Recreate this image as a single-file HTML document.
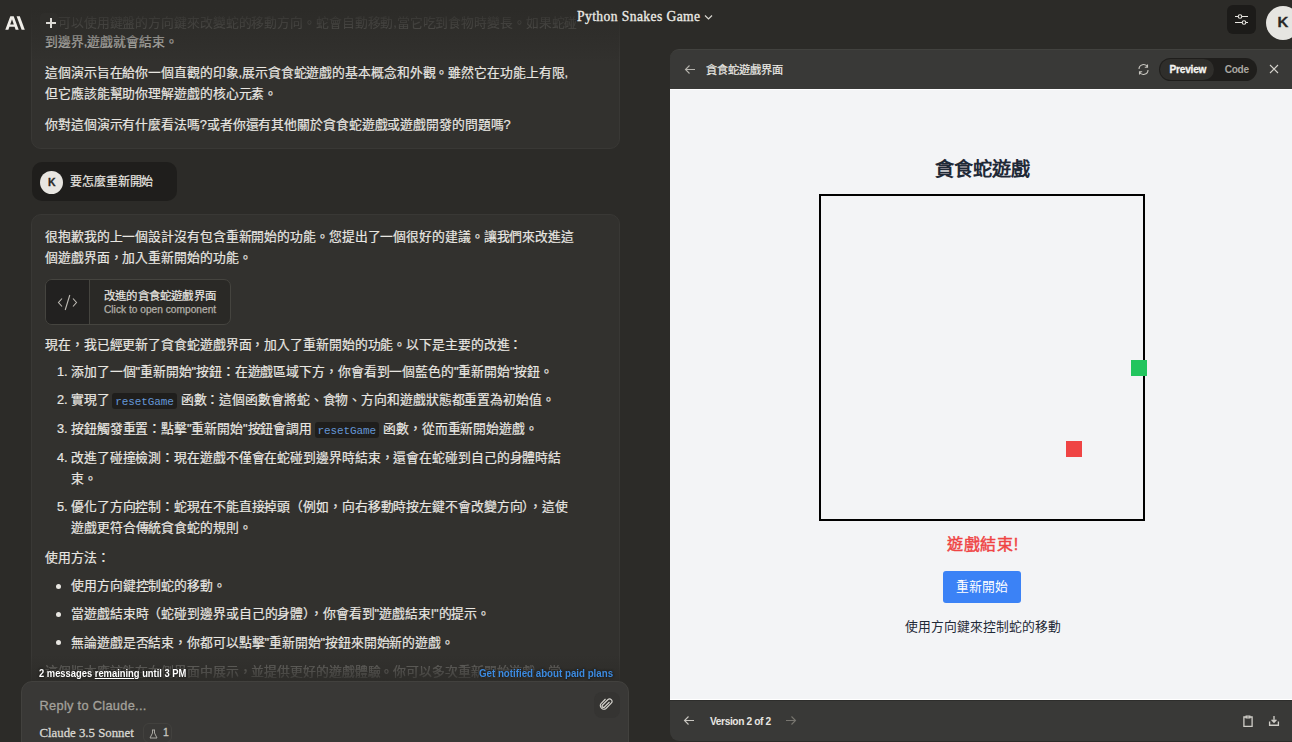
<!DOCTYPE html>
<html lang="zh-TW">
<head>
<meta charset="utf-8">
<style>
*{margin:0;padding:0;box-sizing:border-box}
html,body{width:1292px;height:742px;overflow:hidden;background:#2c2b28;font-family:"Liberation Sans",sans-serif;color:#e8e6e1}
.abs{position:absolute}
.line{position:absolute;white-space:nowrap;font-size:12.8px;line-height:16px;letter-spacing:-0.1px;-webkit-text-stroke:0.2px currentColor}
.card{position:absolute;background:#32312e;border:1px solid #393835;border-radius:10px}
#topfade{position:absolute;left:0;top:0;width:660px;height:62px;background:linear-gradient(#2c2b28 0,#2c2b28 8px,rgba(44,43,40,.65) 28px,rgba(44,43,40,.38) 44px,rgba(44,43,40,0) 62px)}
.code{font-family:"Liberation Mono",monospace;font-size:11px;color:#6496d6;background:#1f1e1c;border-radius:3px;padding:2.5px 3px 2px;margin:0 4px 0 2.5px;-webkit-text-stroke:0}
</style>
</head>
<body>
<!-- first assistant card (cut off) -->
<div class="card" style="left:31px;top:-40px;width:589px;height:189px"></div>
<div class="line" style="left:45px;top:15px;opacity:.4;-webkit-text-stroke:0">你可以使用鍵盤的方向鍵來改變蛇的移動方向。蛇會自動移動,當它吃到食物時變長。如果蛇碰</div>
<div class="line" style="left:45px;top:34px">到邊界,遊戲就會結束。</div>
<div class="line" style="left:45px;top:65px">這個演示旨在給你一個直觀的印象,展示貪食蛇遊戲的基本概念和外觀。雖然它在功能上有限,</div>
<div class="line" style="left:45px;top:86px">但它應該能幫助你理解遊戲的核心元素。</div>
<div class="line" style="left:45px;top:117px">你對這個演示有什麼看法嗎?或者你還有其他關於貪食蛇遊戲或遊戲開發的問題嗎?</div>
<div id="topfade"></div>

<!-- logo -->
<svg class="abs" style="left:4.5px;top:15.8px" width="20" height="14" viewBox="0 0 20 15" preserveAspectRatio="none"><path fill-rule="evenodd" d="M0.3 14.7 L5.3 0.3 H8.7 L13.7 14.7 H10.6 L9.6 11.6 H4.4 L3.4 14.7 Z M5.2 9.1 H8.8 L7 3.6 Z" fill="#f0eee9"/><path d="M11.6 0.3 H14.8 L19.8 14.7 H16.6 Z" fill="#f0eee9"/></svg>
<!-- plus -->
<div class="abs" style="left:40px;top:13px;width:18px;height:20px;background:#2f2e2b;border-radius:4px"></div><div class="abs" style="left:45.5px;top:22px;width:10.6px;height:1.8px;background:#dcdad5"></div>
<div class="abs" style="left:49.9px;top:17.7px;width:1.8px;height:10.6px;background:#dcdad5"></div>

<!-- title -->
<div class="abs" style="left:577px;top:9.4px;font-family:'Liberation Serif',serif;font-size:13.6px;letter-spacing:0.4px;-webkit-text-stroke:0.3px #ecebe6;color:#ecebe6;white-space:nowrap">Python Snakes Game</div>
<svg class="abs" style="left:704px;top:14px" width="9" height="7" viewBox="0 0 9 7"><path d="M1 1.5 L4.5 5 L8 1.5" stroke="#d8d6d0" stroke-width="1.2" fill="none"/></svg>

<!-- settings btn -->
<div class="abs" style="left:1227px;top:5px;width:29px;height:29px;border-radius:6px;background:#1c1b19"></div>
<svg class="abs" style="left:1233px;top:12px" width="17" height="15" viewBox="0 0 17 15"><path d="M2 4.5 H15 M2 10.5 H15" stroke="#e8e6e1" stroke-width="1.1"/><circle cx="7" cy="4.5" r="1.8" fill="#1c1b19" stroke="#e8e6e1" stroke-width="1.1"/><circle cx="11" cy="10.5" r="1.8" fill="#1c1b19" stroke="#e8e6e1" stroke-width="1.1"/></svg>
<!-- avatar -->
<div class="abs" style="left:1266px;top:6px;width:34px;height:34px;border-radius:50%;background:#e6e5e1"></div>
<div class="abs" style="left:1277.5px;top:13px;font-size:15px;font-weight:bold;color:#2a2926;-webkit-text-stroke:0.3px #2a2926">K</div>

<!-- user bubble -->
<div class="abs" style="left:32px;top:162px;width:145px;height:39px;border-radius:10px;background:#1f1e1c"></div>
<div class="abs" style="left:40px;top:171px;width:23px;height:23px;border-radius:50%;background:#e8e6e1"></div>
<div class="abs" style="left:48px;top:176px;font-size:10.5px;font-weight:bold;color:#2a2926;-webkit-text-stroke:0.3px #2a2926">K</div>
<div class="line" style="left:70px;top:174px;font-size:12px">要怎麼重新開始</div>

<!-- second assistant card -->
<div class="card" style="left:31px;top:214px;width:589px;height:560px"></div>
<div class="line" style="left:45px;top:229px">很抱歉我的上一個設計沒有包含重新開始的功能。您提出了一個很好的建議。讓我們來改進這</div>
<div class="line" style="left:45px;top:250px">個遊戲界面，加入重新開始的功能。</div>

<!-- artifact card -->
<div class="abs" style="left:45px;top:279px;width:186px;height:46px;border-radius:7px;background:#2a2926;border:1px solid #45443f;overflow:hidden">
  <div class="abs" style="left:0;top:0;width:44px;height:44px;background:#222120;border-right:1px solid #45443f"></div>
</div>
<svg class="abs" style="left:57px;top:294px" width="21" height="17" viewBox="0 0 21 17"><path d="M5 4.5 L1.5 8.5 L5 12.5 M16 4.5 L19.5 8.5 L16 12.5 M12.8 1 L8.2 16" stroke="#bdbab3" stroke-width="1.1" fill="none"/></svg>
<div class="line" style="left:104px;top:288.5px;font-size:11.4px;line-height:14px;letter-spacing:0.2px">改進的貪食蛇遊戲界面</div>
<div class="line" style="left:104px;top:303.5px;font-size:10.2px;line-height:12px;letter-spacing:0;color:#b3b0a9;-webkit-text-stroke:0.25px #b3b0a9">Click to open component</div>

<div class="line" style="left:45px;top:337px">現在，我已經更新了貪食蛇遊戲界面，加入了重新開始的功能。以下是主要的改進：</div>
<div class="line" style="left:57px;top:364px">1. 添加了一個"重新開始"按鈕：在遊戲區域下方，你會看到一個藍色的"重新開始"按鈕。</div>
<div class="line" style="left:57px;top:392px">2. 實現了<span class="code">resetGame</span>函數：這個函數會將蛇、食物、方向和遊戲狀態都重置為初始值。</div>
<div class="line" style="left:57px;top:421px">3. 按鈕觸發重置：點擊"重新開始"按鈕會調用<span class="code">resetGame</span>函數，從而重新開始遊戲。</div>
<div class="line" style="left:57px;top:450px">4. 改進了碰撞檢測：現在遊戲不僅會在蛇碰到邊界時結束，還會在蛇碰到自己的身體時結</div>
<div class="line" style="left:71px;top:471px">束。</div>
<div class="line" style="left:57px;top:499px">5. 優化了方向控制：蛇現在不能直接掉頭（例如，向右移動時按左鍵不會改變方向），這使</div>
<div class="line" style="left:71px;top:520px">遊戲更符合傳統貪食蛇的規則。</div>
<div class="line" style="left:45px;top:550px">使用方法：</div>
<div class="abs" style="left:55.5px;top:583.5px;width:5px;height:5px;border-radius:50%;background:#e8e6e1"></div>
<div class="line" style="left:71px;top:577.5px">使用方向鍵控制蛇的移動。</div>
<div class="abs" style="left:55.5px;top:611.5px;width:5px;height:5px;border-radius:50%;background:#e8e6e1"></div>
<div class="line" style="left:71px;top:605.5px">當遊戲結束時（蛇碰到邊界或自己的身體），你會看到"遊戲結束!"的提示。</div>
<div class="abs" style="left:55.5px;top:640px;width:5px;height:5px;border-radius:50%;background:#e8e6e1"></div>
<div class="line" style="left:71px;top:634.5px">無論遊戲是否結束，你都可以點擊"重新開始"按鈕來開始新的遊戲。</div>
<div class="line" style="left:45px;top:664px;opacity:.35">這個版本應該能在右側界面中展示，並提供更好的遊戲體驗。你可以多次重新開始遊戲，當</div>

<!-- bottom fade -->
<div class="abs" style="left:0;top:655px;width:660px;height:90px;background:linear-gradient(rgba(44,43,40,0) 0,rgba(44,43,40,.6) 20px,#2c2b28 30px)"></div>
<div class="abs" style="left:39px;top:667.5px;font-size:10.3px;font-weight:bold;color:#fff;white-space:nowrap;text-shadow:0 0 2px #1c1b19,0 0 3px #1c1b19;transform:scaleX(.91);transform-origin:0 0">2 messages <span style="text-decoration:underline">remaining</span> until 3 PM</div>
<div class="abs" style="left:479px;top:667.5px;font-size:10.3px;font-weight:bold;color:#3d8be0;white-space:nowrap;text-shadow:0 0 2px #1c1b19,0 0 3px #1c1b19;transform:scaleX(.945);transform-origin:0 0">Get notified about paid plans</div>

<!-- input box -->
<div class="abs" style="left:21px;top:681px;width:608px;height:80px;border-radius:11px;background:#393836;border:1px solid #42413e"></div>
<div class="abs" style="left:39.5px;top:698px;font-size:12.8px;letter-spacing:0.3px;-webkit-text-stroke:0.3px #a3a19b;color:#a3a19b;white-space:nowrap">Reply to Claude...</div>
<div class="abs" style="left:39.5px;top:726.3px;font-family:'Liberation Serif',serif;font-size:12.8px;-webkit-text-stroke:0.3px #d8d6d0;color:#d8d6d0;white-space:nowrap">Claude 3.5 Sonnet</div>
<div class="abs" style="left:143px;top:723px;width:29px;height:20px;border-radius:6px;border:1px solid #42413e"></div>
<div class="abs" style="left:163px;top:727px;font-size:10.4px;-webkit-text-stroke:0.3px #c8c6c0;color:#c8c6c0">1</div>
<svg class="abs" style="left:149px;top:729px" width="9" height="10" viewBox="0 0 9 10"><path d="M3 1 H6 M3.5 1 V4 L1 9 H8 L5.5 4 V1" stroke="#aaa8a2" stroke-width="1" fill="none"/></svg>
<div class="abs" style="left:594px;top:692px;width:26px;height:26px;border-radius:8px;background:#353432"></div>
<svg class="abs" style="left:599px;top:697px" width="15" height="15" viewBox="0 0 15 15"><path d="M10.5 5 L5.5 10 a1.4 1.4 0 0 1 -2 -2 L9 2.5 a2.5 2.5 0 0 1 3.5 3.5 L7 11.5 a3.6 3.6 0 0 1 -5 -5 L6.5 2" stroke="#d8d6d0" stroke-width="1.1" fill="none"/></svg>

<!-- right panel -->
<div class="abs" style="left:670px;top:49px;width:640px;height:692px;border-radius:9px;background:#393937;overflow:hidden;border-top:1px solid #42423f">
  <div class="abs" style="left:0;top:39px;width:640px;height:611px;background:#f3f4f6;border-top:1px solid #fff;border-bottom:1px solid #fff"></div><div class="abs" style="left:0;top:650px;width:640px;height:1px;background:#2e2e2c"></div>
</div>
<svg class="abs" style="left:684px;top:64px" width="12" height="11" viewBox="0 0 12 11"><path d="M11 5.5 H1.5 M5.5 1.5 L1.5 5.5 L5.5 9.5" stroke="#b5b3ad" stroke-width="1.1" fill="none"/></svg>
<div class="line" style="left:706px;top:62px;font-size:11.2px;letter-spacing:0;color:#ecebe6;-webkit-text-stroke:0.2px #ecebe6">貪食蛇遊戲界面</div>
<svg class="abs" style="left:1137px;top:63px" width="13" height="13" viewBox="0 0 13 13"><path d="M2 6 A4.5 4.5 0 0 1 10.5 4 M11 7 A4.5 4.5 0 0 1 2.5 9 M10.5 1.5 V4.2 H7.8 M2.5 11.5 V8.8 H5.2" stroke="#c9c7c1" stroke-width="1.1" fill="none"/></svg>
<div class="abs" style="left:1159px;top:58px;width:98px;height:23px;border-radius:12px;background:#1f1e1c"></div>
<div class="abs" style="left:1160px;top:59px;width:54px;height:21px;border-radius:11px;background:#2f2e2b"></div>
<div class="abs" style="left:1169.5px;top:64px;font-size:10.1px;font-weight:bold;letter-spacing:-0.2px;color:#f5f4f0;-webkit-text-stroke:0.3px #f5f4f0">Preview</div>
<div class="abs" style="left:1224.7px;top:64px;font-size:10.1px;font-weight:bold;color:#a9a7a1;letter-spacing:-0.3px">Code</div>
<svg class="abs" style="left:1269px;top:64px" width="10" height="10" viewBox="0 0 10 10"><path d="M1 1 L9 9 M9 1 L1 9" stroke="#d5d3cd" stroke-width="1.1"/></svg>

<!-- game -->
<div class="abs" style="left:670px;top:156.5px;width:624px;text-align:center;font-size:19.2px;font-weight:bold;color:#1f2937;line-height:26px">貪食蛇遊戲</div>
<div class="abs" style="left:819px;top:194px;width:326px;height:327px;border:2px solid #000"></div>
<div class="abs" style="left:1131px;top:360px;width:16px;height:16px;background:#22c55e"></div>
<div class="abs" style="left:1066px;top:441px;width:16px;height:16px;background:#ef4444"></div>
<div class="abs" style="left:670px;top:534px;width:626px;text-align:center;font-size:16px;color:#ef4444;line-height:22px;letter-spacing:0.6px;-webkit-text-stroke:0.45px #ef4444">遊戲結束!</div>
<div class="abs" style="left:943px;top:571px;width:78px;height:32px;border-radius:3px;background:#3b82f6;color:#fff;font-size:12.8px;text-align:center;line-height:32px">重新開始</div>
<div class="abs" style="left:670px;top:617.5px;width:626px;text-align:center;font-size:12.8px;color:#1f2937;line-height:18px">使用方向鍵來控制蛇的移動</div>

<!-- footer -->
<svg class="abs" style="left:683px;top:715px" width="12" height="11" viewBox="0 0 12 11"><path d="M11 5.5 H1.5 M5.5 1.5 L1.5 5.5 L5.5 9.5" stroke="#c9c7c1" stroke-width="1.1" fill="none"/></svg>
<div class="abs" style="left:710px;top:715.5px;font-size:10.2px;font-weight:bold;letter-spacing:-0.4px;color:#e8e6e1;white-space:nowrap">Version 2 of 2</div>
<svg class="abs" style="left:785px;top:715px" width="12" height="11" viewBox="0 0 12 11"><path d="M1 5.5 H10.5 M6.5 1.5 L10.5 5.5 L6.5 9.5" stroke="#77756f" stroke-width="1.1" fill="none"/></svg>
<svg class="abs" style="left:1242px;top:714px" width="12" height="14" viewBox="0 0 12 14"><path d="M3.8 3 H1.9 V12.3 H10.1 V3 H8.2 M4.2 2.2 H7.8 V3.8 H4.2 Z" stroke="#cfcdc7" stroke-width="1.3" fill="none"/></svg>
<svg class="abs" style="left:1267px;top:714px" width="13" height="14" viewBox="0 0 13 14"><path d="M7 2 V8.2 M4.6 5.8 L7 8.2 L9.4 5.8 M2.6 7.4 V11.2 H11.4 V7.4" stroke="#cfcdc7" stroke-width="1.35" fill="none"/></svg>
</body>
</html>
